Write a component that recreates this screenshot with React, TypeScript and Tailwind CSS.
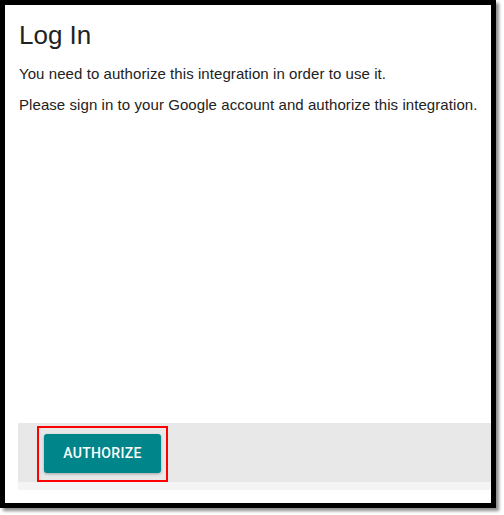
import React from "react";

export default function App() {
  return (
    <div className="w-[504px] h-[515px] bg-white">
      <div className="w-[496px] h-[508px] border-[5px] border-black bg-white shadow-[3px_3px_3px_rgba(0,0,0,0.45)] flex flex-col">
        <div className="flex-1 pl-[14px] pt-[15px] text-[#222222]" style={{ fontFamily: '"Liberation Sans", Arial, sans-serif' }}>
          <h1 className="text-[26px] leading-[30px] font-normal">Log In</h1>
          <p className="mt-[14px] text-[15px] leading-[20px] tracking-[0.07px]">
            You need to authorize this integration in order to use it.
          </p>
          <p className="mt-[11px] text-[15px] leading-[20px] tracking-[0.07px]">
            Please sign in to your Google account and authorize this integration.
          </p>
        </div>
        <div className="ml-[13px] h-[59px] bg-[#e8e8e8] pt-[3px] pl-[19px]">
          <div className="w-[131px] h-[56px] border-2 border-[#ff0000] pt-[6px] pl-[5px]">
            <button
              className="w-[117px] h-[39px] rounded-[3px] bg-[#00868a] text-white text-[14px] font-medium tracking-[0.3px] uppercase shadow-[0_1px_3px_rgba(0,0,0,0.3)]"
              style={{ fontFamily: 'Roboto, "Liberation Sans", sans-serif' }}
            >
              Authorize
            </button>
          </div>
        </div>
        <div className="ml-[13px] h-[8px] bg-[#f4f4f4]" />
        <div className="h-[13px]" />
      </div>
    </div>
  );
}
